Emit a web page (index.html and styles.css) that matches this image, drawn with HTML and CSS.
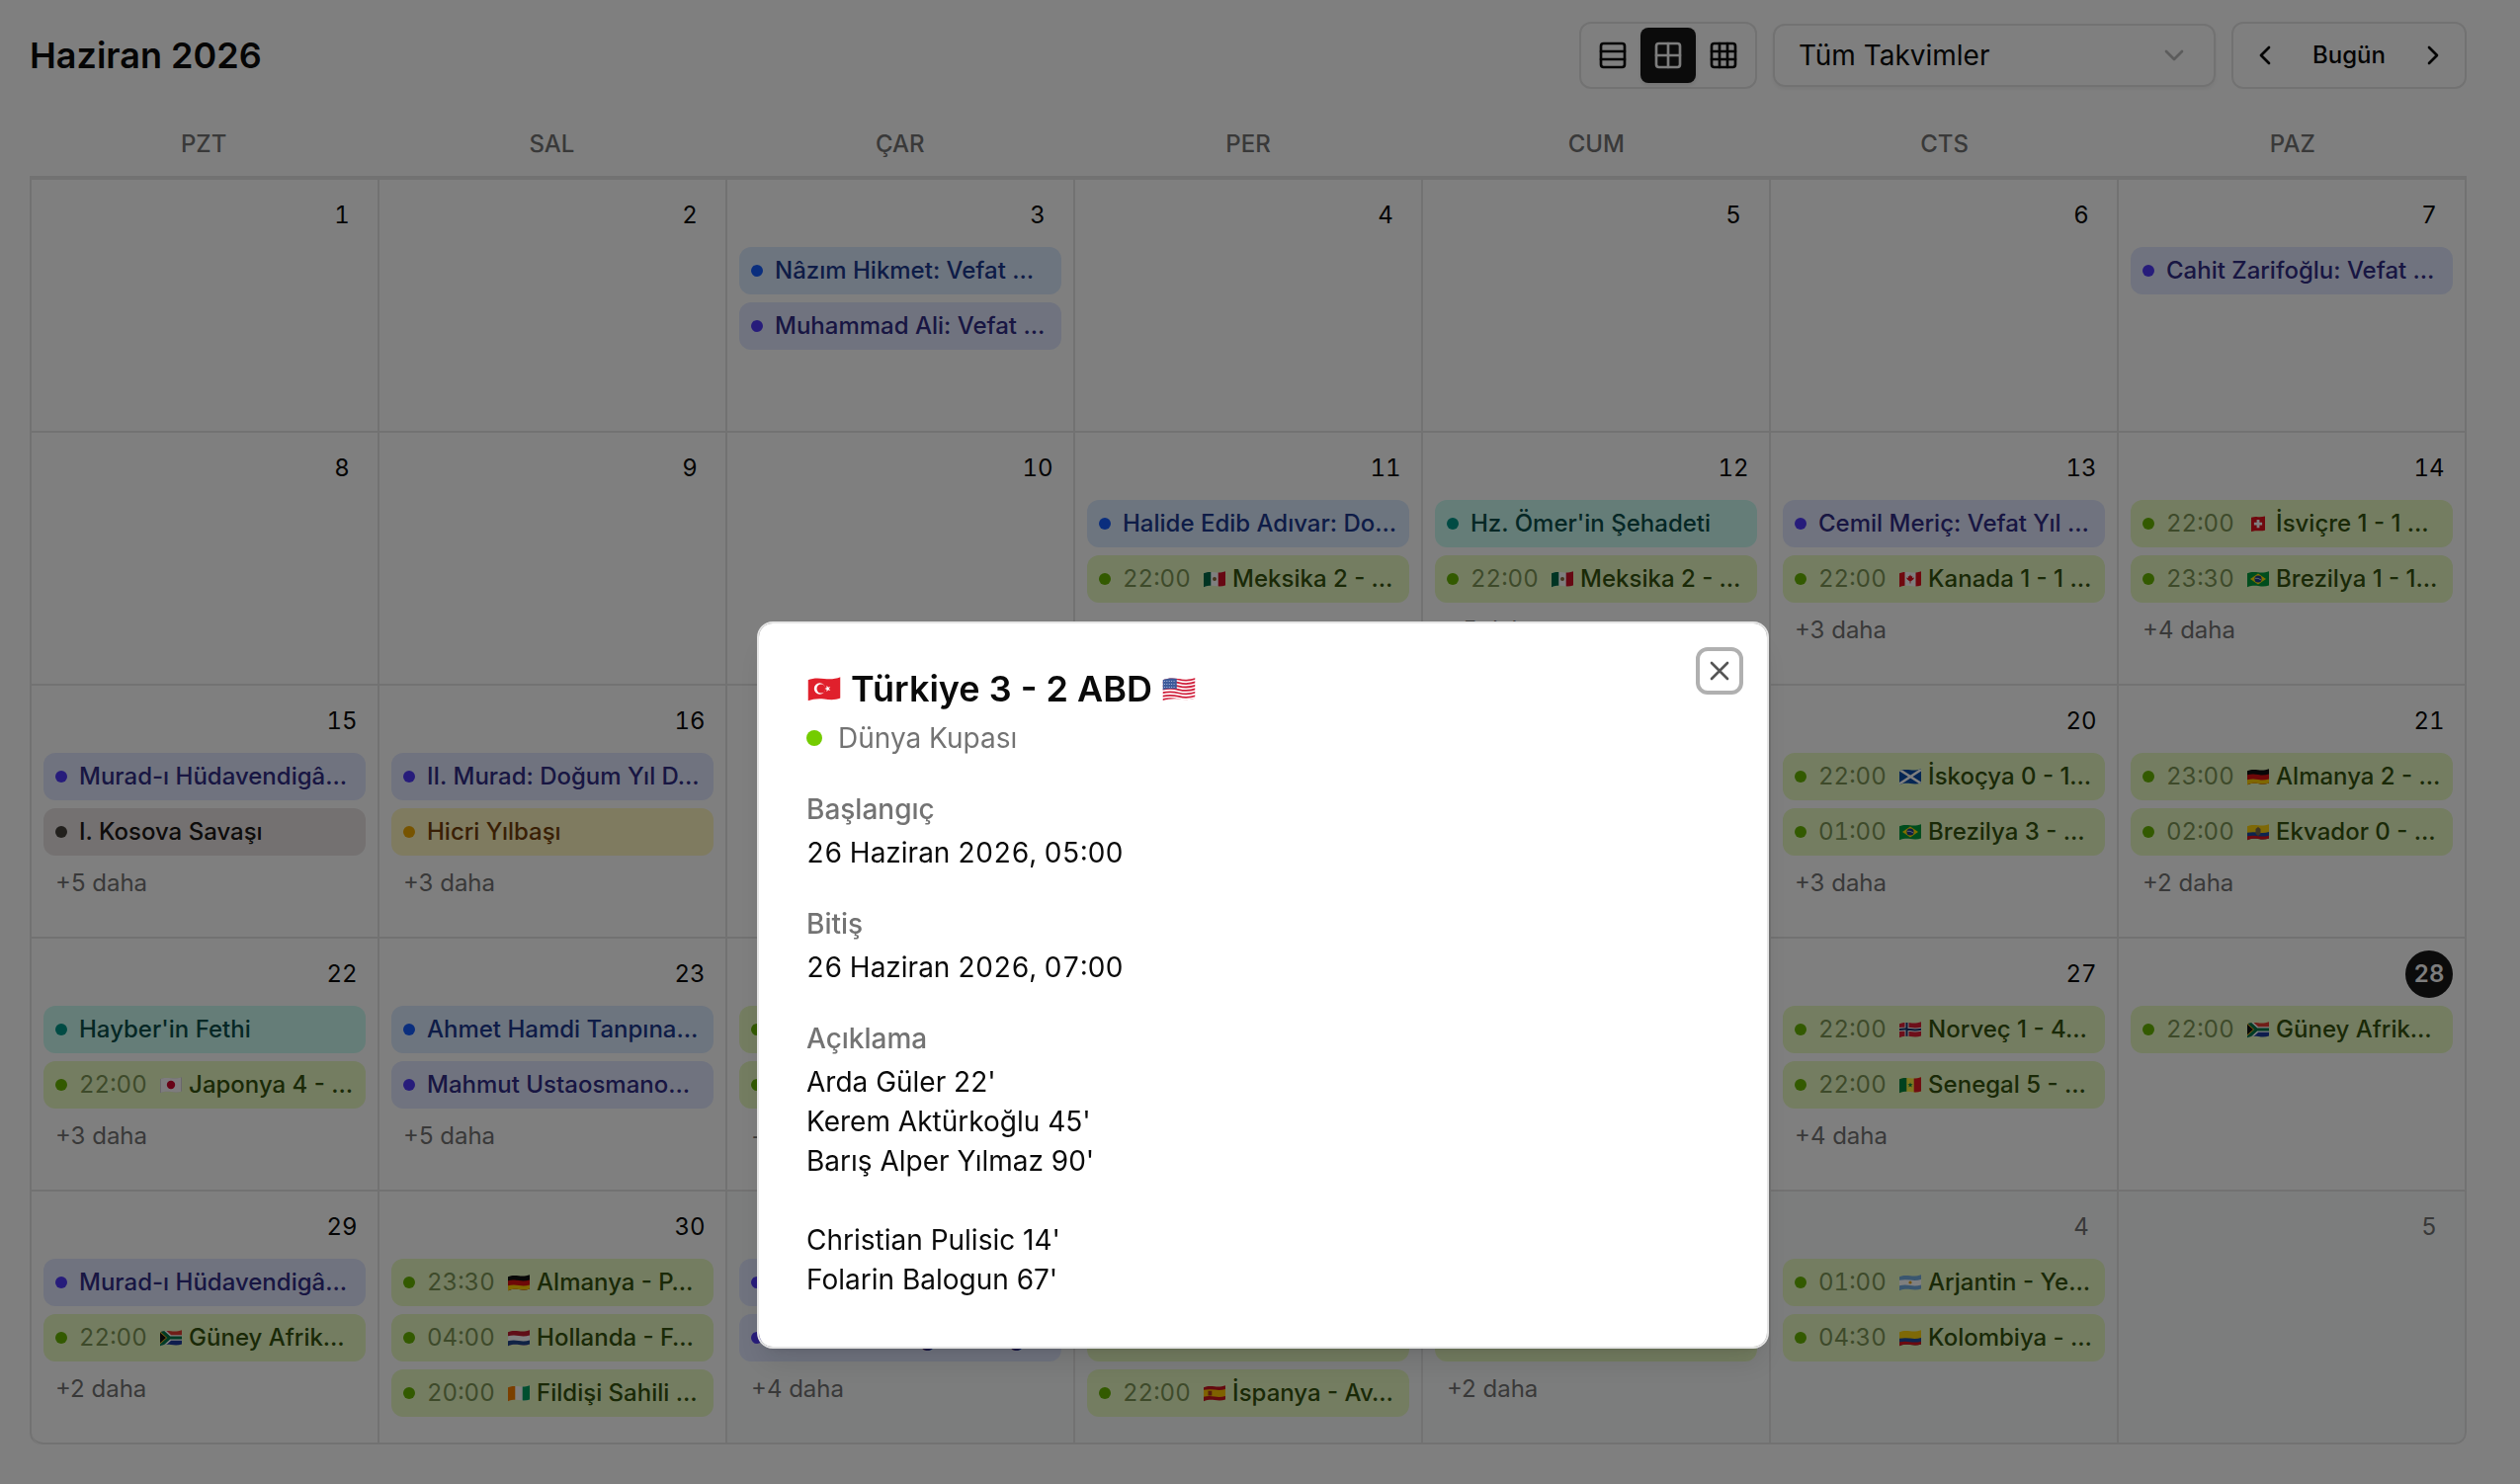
FILE: index.html
```html
<!DOCTYPE html>
<html lang="tr">
<head>
<meta charset="utf-8">
<meta name="viewport" content="width=device-width, initial-scale=1">
<title>Haziran 2026</title>
<link rel="stylesheet" href="styles.css">
</head>
<body>
<svg class="sprite" aria-hidden="true">
  <defs>
    <clipPath id="wave"><path d="M1 6.2C4.500 4.600 8.500 4.800 12 5.300S19.500 5.600 23 4.200V18.400C19.500 19.800 15.500 19.500 12 19S4.500 18.800 1 20.200Z"/></clipPath>
    <clipPath id="wave-sq"><path d="M5 5.800C8 4.800 10 5 12 5.200S16.500 5.200 19 4.500V18.700C16 19.600 14 19.300 12 19.200S8 19 5 19.900Z"/></clipPath>
  </defs>
  <symbol id="f-tr" viewBox="0 0 24 24"><g clip-path="url(#wave)"><path fill="#e0202c" d="M0 0h24v24H0z"/><circle cx="9" cy="12" r="3.800" fill="#fff"/><circle cx="10" cy="12" r="3" fill="#e0202c"/><path fill="#fff" d="M12.200 12l1.500-.5v-1.600l1 1.300 1.500-.5-1 1.300 1 1.300-1.500-.5-1 1.300v-1.600z"/></g></symbol>
  <symbol id="f-us" viewBox="0 0 24 24"><g clip-path="url(#wave)"><path fill="#fff" d="M0 0h24v24H0z"/><path d="M0 5.800q6-1.500 12 0t12-.8M0 8.100q6-1.500 12 0t12-.8M0 10.400q6-1.500 12 0t12-.8M0 12.700q6-1.500 12 0t12-.8M0 15q6-1.500 12 0t12-.8M0 17.300q6-1.500 12 0t12-.8M0 19.600q6-1.500 12 0t12-.8" stroke="#d0203c" stroke-width="1.200" fill="none"/><path fill="#3c5a9a" d="M0 3h10.500v9.200Q5 11.500 0 13z"/><path d="M2 7h8M2 9h8M2 11h8" stroke="#c5d0e8" stroke-width=".6" stroke-dasharray=".6 1"/></g></symbol>
  <symbol id="f-mx" viewBox="0 0 24 24"><g clip-path="url(#wave)"><path fill="#fff" d="M0 0h24v24H0z"/><path fill="#006847" d="M0 0h8.300v24H0z"/><path fill="#ce1126" d="M15.700 0H24v24h-8.300z"/><circle cx="12" cy="12" r="2" fill="#8b6a3c"/></g></symbol>
  <symbol id="f-ca" viewBox="0 0 24 24"><g clip-path="url(#wave)"><path fill="#fff" d="M0 0h24v24H0z"/><path fill="#e0101c" d="M0 0h6.500v24H0zM17.500 0H24v24h-6.500zM12 7.500l1 2 1.200-.5-.2 2 2-.4-.7 1.600-2.500 2h-1.600l-2.500-2-.7-1.600 2 .4-.2-2 1.200.5zM11.600 14h.8v2.500h-.8z"/></g></symbol>
  <symbol id="f-ch" viewBox="0 0 24 24"><g clip-path="url(#wave-sq)"><path fill="#e0101c" d="M0 0h24v24H0z"/><path fill="#fff" d="M10.600 8h2.800v2.700h2.700v2.800h-2.700v2.700h-2.800v-2.700H7.900v-2.800h2.700z"/></g></symbol>
  <symbol id="f-br" viewBox="0 0 24 24"><g clip-path="url(#wave)"><path fill="#009b3a" d="M0 0h24v24H0z"/><path fill="#fedf00" d="M12 6.500l8 5.500-8 5.500L4 12z"/><circle cx="12" cy="12" r="3.600" fill="#1d3c8c"/><path d="M9 11.300q3-.6 6 1.600" stroke="#fff" stroke-width=".7" fill="none"/></g></symbol>
  <symbol id="f-sco" viewBox="0 0 24 24"><g clip-path="url(#wave)"><path fill="#0a4ca8" d="M0 0h24v24H0z"/><path d="M1 5l22 14M1 19.500L23 5" stroke="#fff" stroke-width="2.600"/></g></symbol>
  <symbol id="f-de" viewBox="0 0 24 24"><g clip-path="url(#wave)"><path fill="#111" d="M0 0h24v24H0z"/><path fill="#dd1010" d="M0 10.500q6-1.600 12-.4t12-.8V24H0z"/><path fill="#ffce00" d="M0 15.500q6-1.600 12-.4t12-.8V24H0z"/></g></symbol>
  <symbol id="f-ec" viewBox="0 0 24 24"><g clip-path="url(#wave)"><path fill="#fcd20f" d="M0 0h24v24H0z"/><path fill="#1c4ba0" d="M0 13q6-1.500 12-.4t12-.8V24H0z"/><path fill="#d8141f" d="M0 16.600q6-1.500 12-.4t12-.8V24H0z"/><path fill="#7a6a4a" d="M9.500 9l2.500-2 2.500 2v5l-2.500 2-2.500-2z"/></g></symbol>
  <symbol id="f-co" viewBox="0 0 24 24"><g clip-path="url(#wave)"><path fill="#fcd20f" d="M0 0h24v24H0z"/><path fill="#1c4ba0" d="M0 13q6-1.500 12-.4t12-.8V24H0z"/><path fill="#d8141f" d="M0 16.600q6-1.500 12-.4t12-.8V24H0z"/></g></symbol>
  <symbol id="f-jp" viewBox="0 0 24 24"><g clip-path="url(#wave)"><path fill="#d4cfd6" d="M0 0h24v24H0z"/><path fill="#fdf8fd" d="M2 0h20v24H2z"/><circle cx="12" cy="12" r="4.200" fill="#d0052f"/></g></symbol>
  <symbol id="f-za" viewBox="0 0 24 24"><g clip-path="url(#wave)"><path fill="#e03c31" d="M0 0h24v12H0z"/><path fill="#1c3a9c" d="M0 12h24v12H0z"/><path d="M0 2l11 10L0 22M11 12h13" stroke="#fff" stroke-width="5.600" fill="none"/><path fill="#ffb81c" d="M0 4.500L9 12l-9 7.500z"/><path d="M0 2.500L10.500 12 0 21.500M10 12h14" stroke="#007749" stroke-width="3.200" fill="none"/><path fill="#111" d="M0 6l7 6-7 6z"/></g></symbol>
  <symbol id="f-nl" viewBox="0 0 24 24"><g clip-path="url(#wave)"><path fill="#c01c30" d="M0 0h24v24H0z"/><path fill="#fff" d="M0 10.500q6-1.600 12-.4t12-.8V24H0z"/><path fill="#21468b" d="M0 15.500q6-1.600 12-.4t12-.8V24H0z"/></g></symbol>
  <symbol id="f-ci" viewBox="0 0 24 24"><g clip-path="url(#wave)"><path fill="#fff" d="M0 0h24v24H0z"/><path fill="#f77f00" d="M0 0h8.300v24H0z"/><path fill="#009e60" d="M15.700 0H24v24h-8.300z"/></g></symbol>
  <symbol id="f-es" viewBox="0 0 24 24"><g clip-path="url(#wave)"><path fill="#c8141e" d="M0 0h24v24H0z"/><path fill="#ffc400" d="M0 9q6-1.500 12-.4t12-.8v7q-6 2-12 .8T0 16z"/><path fill="#ad3a1c" d="M5.500 9.800h3.800v4.600H5.500z"/></g></symbol>
  <symbol id="f-no" viewBox="0 0 24 24"><g clip-path="url(#wave)"><path fill="#dc1e35" d="M0 0h24v24H0z"/><path d="M8.500 0v24M0 12.200q6-1.200 12-.2t12-.5" stroke="#fff" stroke-width="4" fill="none"/><path d="M8.500 0v24M0 12.200q6-1.200 12-.2t12-.5" stroke="#15306b" stroke-width="2" fill="none"/></g></symbol>
  <symbol id="f-sn" viewBox="0 0 24 24"><g clip-path="url(#wave)"><path fill="#fdef42" d="M0 0h24v24H0z"/><path fill="#00853f" d="M0 0h8.300v24H0zM12 9.500l.7 1.800h1.900l-1.500 1.200.6 1.900-1.700-1.100-1.700 1.100.6-1.900-1.500-1.200h1.900z"/><path fill="#e31b23" d="M15.700 0H24v24h-8.300z"/></g></symbol>
  <symbol id="f-ar" viewBox="0 0 24 24"><g clip-path="url(#wave)"><path fill="#74acdf" d="M0 0h24v24H0z"/><path fill="#fff" d="M0 10q6-1.500 12-.4t12-.8v5.500q-6 2-12 .8T0 15.500z"/><circle cx="12" cy="12" r="1.600" fill="#e8a317"/></g></symbol>
</svg>

<div class="page">
  <header class="toolbar">
    <h1 class="month">Haziran 2026</h1>
    <div class="controls">
      <div class="group" role="group" aria-label="Görünüm">
        <button class="icon-btn" type="button" aria-label="Liste"><svg class="icon" viewBox="0 0 24 24"><rect x="3" y="3" width="18" height="18" rx="2"/><path d="M21 9H3M21 15H3"/></svg></button>
        <button class="icon-btn is-active" type="button" aria-label="Ay" aria-pressed="true"><svg class="icon" viewBox="0 0 24 24"><rect x="3" y="3" width="18" height="18" rx="2"/><path d="M12 3v18M3 12h18"/></svg></button>
        <button class="icon-btn" type="button" aria-label="Yıl"><svg class="icon" viewBox="0 0 24 24"><rect x="3" y="3" width="18" height="18" rx="2"/><path d="M3 9h18M3 15h18M9 3v18M15 3v18"/></svg></button>
      </div>
      <div class="picker">
        <select class="select" aria-label="Takvim"><option>Tüm Takvimler</option></select>
        <svg class="icon picker-arrow" viewBox="0 0 24 24"><path d="m6 9 6 6 6-6"/></svg>
      </div>
      <div class="group" role="group" aria-label="Gezinme">
        <button class="icon-btn" type="button" aria-label="Önceki"><svg class="icon" viewBox="0 0 24 24"><path d="m15 18-6-6 6-6"/></svg></button>
        <button class="today-btn" type="button">Bugün</button>
        <button class="icon-btn" type="button" aria-label="Sonraki"><svg class="icon" viewBox="0 0 24 24"><path d="m9 18 6-6-6-6"/></svg></button>
      </div>
    </div>
  </header>

  <div class="weekdays">
    <span>PZT</span><span>SAL</span><span>ÇAR</span><span>PER</span><span>CUM</span><span>CTS</span><span>PAZ</span>
  </div>

  <main class="grid">
    <div class="day"><span class="num">1</span></div>
    <div class="day"><span class="num">2</span></div>
    <div class="day"><span class="num">3</span>
      <button class="event blue"><span class="name">Nâzım Hikmet: Vefat …</span></button>
      <button class="event indigo"><span class="name">Muhammad Ali: Vefat …</span></button>
    </div>
    <div class="day"><span class="num">4</span></div>
    <div class="day"><span class="num">5</span></div>
    <div class="day"><span class="num">6</span></div>
    <div class="day"><span class="num">7</span>
      <button class="event indigo"><span class="name">Cahit Zarifoğlu: Vefat …</span></button>
    </div>

    <div class="day"><span class="num">8</span></div>
    <div class="day"><span class="num">9</span></div>
    <div class="day"><span class="num">10</span></div>
    <div class="day"><span class="num">11</span>
      <button class="event blue"><span class="name">Halide Edib Adıvar: Do…</span></button>
      <button class="event lime"><time>22:00</time><span class="name"><svg class="flag"><use href="#f-mx"/></svg> Meksika 2 - …</span></button>
    </div>
    <div class="day"><span class="num">12</span>
      <button class="event teal"><span class="name">Hz. Ömer'in Şehadeti</span></button>
      <button class="event lime"><time>22:00</time><span class="name"><svg class="flag"><use href="#f-mx"/></svg> Meksika 2 - …</span></button>
      <button class="more">+5 daha</button>
    </div>
    <div class="day"><span class="num">13</span>
      <button class="event indigo"><span class="name">Cemil Meriç: Vefat Yıl …</span></button>
      <button class="event lime"><time>22:00</time><span class="name"><svg class="flag"><use href="#f-ca"/></svg> Kanada 1 - 1 …</span></button>
      <button class="more">+3 daha</button>
    </div>
    <div class="day"><span class="num">14</span>
      <button class="event lime"><time>22:00</time><span class="name"><svg class="flag"><use href="#f-ch"/></svg> İsviçre 1 - 1 …</span></button>
      <button class="event lime"><time>23:30</time><span class="name"><svg class="flag"><use href="#f-br"/></svg> Brezilya 1 - 1…</span></button>
      <button class="more">+4 daha</button>
    </div>

    <div class="day"><span class="num">15</span>
      <button class="event indigo"><span class="name">Murad-ı Hüdavendigâ…</span></button>
      <button class="event stone"><span class="name">I. Kosova Savaşı</span></button>
      <button class="more">+5 daha</button>
    </div>
    <div class="day"><span class="num">16</span>
      <button class="event indigo"><span class="name">II. Murad: Doğum Yıl D…</span></button>
      <button class="event yellow"><span class="name">Hicri Yılbaşı</span></button>
      <button class="more">+3 daha</button>
    </div>
    <div class="day"></div>
    <div class="day"></div>
    <div class="day"></div>
    <div class="day"><span class="num">20</span>
      <button class="event lime"><time>22:00</time><span class="name"><svg class="flag"><use href="#f-sco"/></svg> İskoçya 0 - 1…</span></button>
      <button class="event lime"><time>01:00</time><span class="name"><svg class="flag"><use href="#f-br"/></svg> Brezilya 3 - …</span></button>
      <button class="more">+3 daha</button>
    </div>
    <div class="day"><span class="num">21</span>
      <button class="event lime"><time>23:00</time><span class="name"><svg class="flag"><use href="#f-de"/></svg> Almanya 2 - …</span></button>
      <button class="event lime"><time>02:00</time><span class="name"><svg class="flag"><use href="#f-ec"/></svg> Ekvador 0 - …</span></button>
      <button class="more">+2 daha</button>
    </div>

    <div class="day"><span class="num">22</span>
      <button class="event teal"><span class="name">Hayber'in Fethi</span></button>
      <button class="event lime"><time>22:00</time><span class="name"><svg class="flag"><use href="#f-jp"/></svg> Japonya 4 - …</span></button>
      <button class="more">+3 daha</button>
    </div>
    <div class="day"><span class="num">23</span>
      <button class="event blue"><span class="name">Ahmet Hamdi Tanpına…</span></button>
      <button class="event indigo"><span class="name">Mahmut Ustaosmano…</span></button>
      <button class="more">+5 daha</button>
    </div>
    <div class="day"><span class="num"></span>
      <button class="event lime"></button>
      <button class="event lime"></button>
      <button class="more">+</button>
    </div>
    <div class="day"></div>
    <div class="day"></div>
    <div class="day"><span class="num">27</span>
      <button class="event lime"><time>22:00</time><span class="name"><svg class="flag"><use href="#f-no"/></svg> Norveç 1 - 4…</span></button>
      <button class="event lime"><time>22:00</time><span class="name"><svg class="flag"><use href="#f-sn"/></svg> Senegal 5 - …</span></button>
      <button class="more">+4 daha</button>
    </div>
    <div class="day"><span class="num is-today">28</span>
      <button class="event lime"><time>22:00</time><span class="name"><svg class="flag"><use href="#f-za"/></svg> Güney Afrik…</span></button>
    </div>

    <div class="day"><span class="num">29</span>
      <button class="event indigo"><span class="name">Murad-ı Hüdavendigâ…</span></button>
      <button class="event lime"><time>22:00</time><span class="name"><svg class="flag"><use href="#f-za"/></svg> Güney Afrik…</span></button>
      <button class="more">+2 daha</button>
    </div>
    <div class="day"><span class="num">30</span>
      <button class="event lime"><time>23:30</time><span class="name"><svg class="flag"><use href="#f-de"/></svg> Almanya - P…</span></button>
      <button class="event lime"><time>04:00</time><span class="name"><svg class="flag"><use href="#f-nl"/></svg> Hollanda - F…</span></button>
      <button class="event lime"><time>20:00</time><span class="name"><svg class="flag"><use href="#f-ci"/></svg> Fildişi Sahili …</span></button>
    </div>
    <div class="day is-outside"><span class="num"></span>
      <button class="event indigo"></button>
      <button class="event indigo"><span class="name">Mehmet Ertuğrul: Doğ…</span></button>
      <button class="more">+4 daha</button>
    </div>
    <div class="day is-outside"><span class="num"></span>
      <button class="event lime"></button>
      <button class="event lime"></button>
      <button class="event lime"><time>22:00</time><span class="name"><svg class="flag"><use href="#f-es"/></svg> İspanya - Av…</span></button>
    </div>
    <div class="day is-outside"><span class="num"></span>
      <button class="event lime"></button>
      <button class="event lime"></button>
      <button class="more">+2 daha</button>
    </div>
    <div class="day is-outside"><span class="num">4</span>
      <button class="event lime"><time>01:00</time><span class="name"><svg class="flag"><use href="#f-ar"/></svg> Arjantin - Ye…</span></button>
      <button class="event lime"><time>04:30</time><span class="name"><svg class="flag"><use href="#f-co"/></svg> Kolombiya - …</span></button>
    </div>
    <div class="day is-outside"><span class="num">5</span></div>
  </main>
</div>

<div class="overlay">
  <section class="dialog" role="dialog" aria-modal="true" aria-labelledby="dialog-title">
    <h2 class="dialog-title" id="dialog-title"><svg class="flag"><use href="#f-tr"/></svg> Türkiye 3 - 2 ABD <svg class="flag"><use href="#f-us"/></svg></h2>
    <p class="dialog-cal">Dünya Kupası</p>
    <dl class="details">
      <div class="detail"><dt>Başlangıç</dt><dd class="when">26 Haziran 2026, 05:00</dd></div>
      <div class="detail"><dt>Bitiş</dt><dd class="when">26 Haziran 2026, 07:00</dd></div>
      <div class="detail"><dt>Açıklama</dt><dd>Arda Güler 22'
Kerem Aktürkoğlu 45'
Barış Alper Yılmaz 90'

Christian Pulisic 14'
Folarin Balogun 67'</dd></div>
    </dl>
    <button class="close" type="button" aria-label="Kapat"><svg class="icon" viewBox="0 0 24 24"><path d="M18 6 6 18M6 6l12 12"/></svg></button>
  </section>
</div>
</body>
</html>
```
FILE: styles.css
```css
* {
  box-sizing: border-box;
}

body {
  margin: 0;
  background: #fff;
  color: #0a0a0a;
  font-family: Inter, "Liberation Sans", sans-serif;
  font-size: 28px;
  line-height: 40px;
}

h1, h2, p, dl, dd {
  margin: 0;
}

button, select {
  margin: 0;
  padding: 0;
  border: 0;
  background: none;
  color: inherit;
  font: inherit;
}

.sprite {
  position: absolute;
  width: 0;
  height: 0;
}

.icon {
  display: block;
  width: 32px;
  height: 32px;
  fill: none;
  stroke: currentColor;
  stroke-width: 2;
  stroke-linecap: round;
  stroke-linejoin: round;
}

.flag {
  display: inline-block;
  width: 1em;
  height: 1em;
  vertical-align: -0.15em;
}

.page {
  padding: 22px 54px 40px 30px;
}

/* Toolbar */

.toolbar {
  display: flex;
  align-items: center;
  justify-content: space-between;
}

.month {
  font-size: 36px;
  font-weight: 600;
  line-height: 56px;
}

.controls {
  display: flex;
  align-items: center;
  gap: 16px;
}

.group {
  display: flex;
  padding: 4px;
  border: 2px solid #e5e5e5;
  border-radius: 12px;
}

.icon-btn {
  display: grid;
  place-items: center;
  width: 56px;
  height: 56px;
  border-radius: 8px;
}

.icon-btn.is-active {
  background: #171717;
  color: #fafafa;
  box-shadow: 0 2px 4px rgb(0 0 0 / 10%);
}

.today-btn {
  padding: 0 20px;
  font-size: 24px;
  font-weight: 500;
}

.picker {
  display: grid;
  align-items: center;
  width: 448px;
}

.select,
.picker-arrow {
  grid-area: 1 / 1;
}

.select {
  width: 100%;
  height: 64px;
  padding: 0 24px;
  border: 2px solid #e5e5e5;
  border-radius: 12px;
  box-shadow: 0 2px 4px rgb(0 0 0 / 6%);
  appearance: none;
}

.picker-arrow {
  justify-self: end;
  margin-right: 26px;
  color: #737373;
  opacity: 0.5;
  pointer-events: none;
}

/* Month grid */

.weekdays {
  display: grid;
  grid-template-columns: repeat(7, 1fr);
  padding: 36px 0 12px;
  color: #737373;
  font-size: 24px;
  font-weight: 500;
  text-align: center;
}

.grid {
  display: grid;
  grid-template-columns: repeat(7, minmax(0, 1fr));
  grid-auto-rows: minmax(256px, auto);
  overflow: hidden;
  border-top: 4px solid #e5e5e5;
  border-left: 2px solid #e5e5e5;
  border-radius: 0 0 12px 12px;
}

.day {
  display: flex;
  flex-direction: column;
  gap: 8px;
  padding: 12px;
  border-right: 2px solid #e5e5e5;
  border-bottom: 2px solid #e5e5e5;
  font-size: 24px;
}

.day:nth-last-child(7) {
  border-bottom-left-radius: 12px;
}

.day:last-child {
  border-bottom-right-radius: 12px;
}

.day.is-outside {
  background: #f9fbfb;
}

.num {
  align-self: flex-end;
  width: 48px;
  height: 48px;
  border-radius: 50%;
  line-height: 48px;
  text-align: center;
}

.num,
.event time,
.when {
  font-variant-numeric: tabular-nums;
}

.is-outside .num {
  color: #737373;
}

.num.is-today {
  background: #171717;
  color: #fafafa;
  font-weight: 600;
}

.event {
  display: flex;
  align-items: center;
  gap: 12px;
  height: 48px;
  padding: 0 12px;
  border-radius: 12px;
  font-weight: 500;
  text-align: left;
}

.event::before {
  content: "";
  flex: none;
  width: 12px;
  height: 12px;
  border-radius: 50%;
  background: var(--dot);
}

.event time {
  font-weight: 400;
  opacity: 0.6;
}

.name {
  overflow: hidden;
  white-space: nowrap;
}

.blue {
  --dot: #155dfc;
  background: #dbeafe;
  color: #1c398e;
}

.indigo {
  --dot: #4f39f6;
  background: #e0e7ff;
  color: #312c85;
}

.teal {
  --dot: #009689;
  background: #cbfbf1;
  color: #0b4f4a;
}

.lime {
  --dot: #66b400;
  background: #e8fbc2;
  color: #35530e;
}

.yellow {
  --dot: #efa800;
  background: #fef6c0;
  color: #733e0a;
}

.stone {
  --dot: #44403b;
  background: #e8e3e3;
  color: #1c1917;
}

.more {
  align-self: flex-start;
  padding: 0 12px;
  color: #737373;
}

/* Event dialog */

.overlay {
  position: fixed;
  inset: 0;
  display: flex;
  align-items: flex-start;
  justify-content: center;
  padding: 629px 0 0 6px;
  background: rgb(0 0 0 / 50%);
}

.dialog {
  position: relative;
  width: 1024px;
  padding: 48px;
  border: 2px solid #e5e5e5;
  border-radius: 16px;
  background: #fff;
  background-clip: padding-box;
  box-shadow: 0 20px 30px -6px rgb(0 0 0 / 10%), 0 8px 12px -8px rgb(0 0 0 / 10%);
}

.dialog-title {
  font-size: 36px;
  font-weight: 600;
  line-height: 36px;
}

.dialog-cal {
  display: flex;
  align-items: center;
  gap: 16px;
  margin-top: 12px;
  color: #737373;
}

.dialog-cal::before {
  content: "";
  width: 16px;
  height: 16px;
  border-radius: 50%;
  background: #74cc00;
}

.details {
  display: flex;
  flex-direction: column;
  gap: 32px;
  margin-top: 32px;
}

.detail {
  display: flex;
  flex-direction: column;
  gap: 4px;
}

.detail dt {
  color: #737373;
  font-weight: 500;
}

.detail dd {
  white-space: pre-line;
}

.close {
  position: absolute;
  top: 32px;
  right: 32px;
  border-radius: 4px;
  color: #555;
  outline: 4px solid #b0b0b0;
  outline-offset: 4px;
}
```
